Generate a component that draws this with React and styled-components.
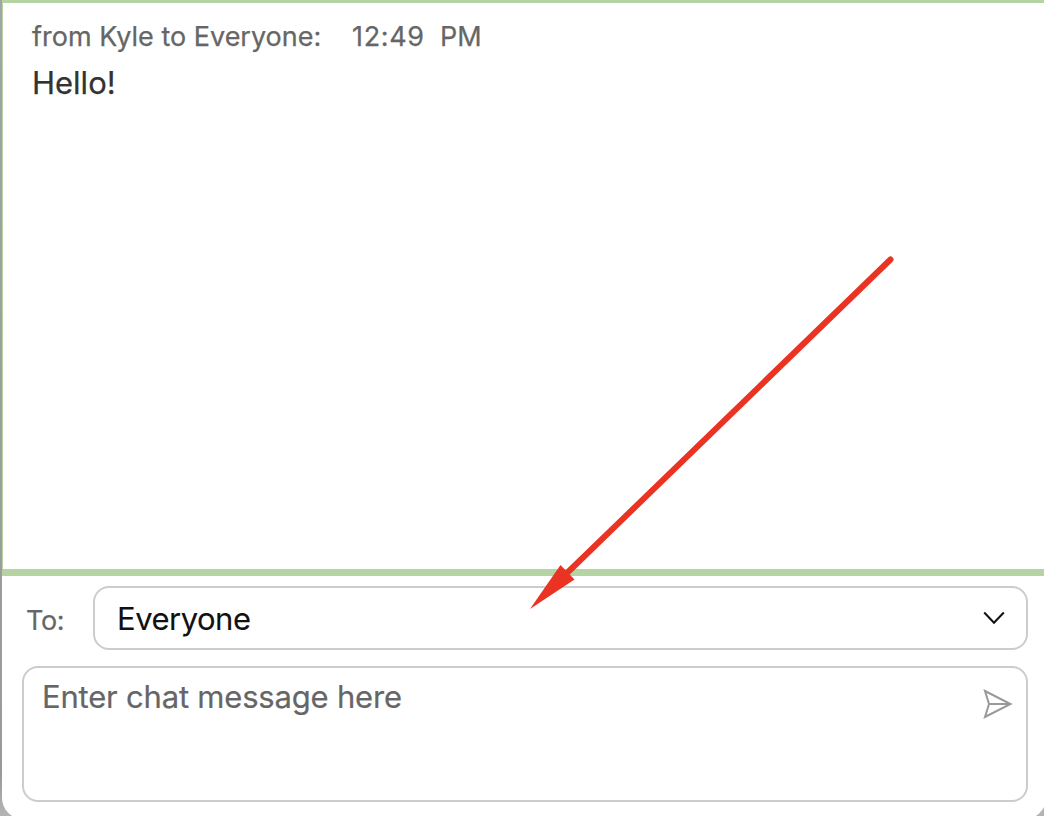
import React, { useState } from "react";
import styled, { createGlobalStyle } from "styled-components";

function App() {
  const [message, setMessage] = useState("");

  return (
    <Desktop>
      <GlobalStyle />
      <ChatWindow>
        <Messages>
          <MessageInfo>
            <Sender>from Kyle to Everyone:</Sender>
            <Time>12:49</Time>
            <Period>PM</Period>
          </MessageInfo>
          <MessageText>Hello!</MessageText>
        </Messages>
        <Recipient>
          <Label>To:</Label>
          <Select>
            <SelectValue>Everyone</SelectValue>
            <ChevronIcon viewBox="0 0 22 14">
              <path d="M1.2 1.5 L11 11.8 L20.8 1.5" />
            </ChevronIcon>
          </Select>
        </Recipient>
        <Composer>
          <Input
            placeholder="Enter chat message here"
            value={message}
            onChange={(e) => setMessage(e.target.value)}
          />
          <SendIcon viewBox="0 0 30 30">
            <path d="M2 2 L27.5 15 L2 28 L6 15 Z M6 15 H27" />
          </SendIcon>
        </Composer>
      </ChatWindow>
      <Arrow viewBox="0 0 1044 816">
        <line x1="890.5" y1="259.5" x2="566" y2="574" />
        <polygon points="530,609 560.5,565 574.5,579.5" />
      </Arrow>
    </Desktop>
  );
}

export default App;

const GlobalStyle = createGlobalStyle`
  * {
    box-sizing: border-box;
  }
  body {
    margin: 0;
    font-family: Inter, "Liberation Sans", sans-serif;
  }
`;

const Desktop = styled.div`
  position: relative;
  width: 1044px;
  height: 816px;
  padding-left: 2px;
  overflow: hidden;
  background: linear-gradient(#a3a3a8, #9a9a9a 95%, #b4b4b4);
`;

const ChatWindow = styled.div`
  display: flex;
  flex-direction: column;
  width: 1044px;
  height: 819px;
  background: #fff;
  border-radius: 0 0 21px 21px;
`;

const Messages = styled.div`
  height: 576px;
  padding: 17px 29px;
  border-top: 3px solid #b5d3a3;
  border-left: 1px solid #b5d3a3;
  border-bottom: 7px solid #b5d3a3;
`;

const MessageInfo = styled.div`
  display: flex;
  color: #666;
  font-size: 27px;
  line-height: 34px;
  -webkit-text-stroke: 0.25px #666;
`;

const Sender = styled.span`
  width: 320px;
  white-space: nowrap;
`;

const Time = styled.span`
  width: 88px;
  letter-spacing: 0.65px;
`;

const Period = styled.span``;

const MessageText = styled.div`
  margin-top: 9px;
  color: #333;
  font-size: 31px;
  line-height: 40px;
  -webkit-text-stroke: 0.25px #333;
`;

const Recipient = styled.div`
  display: flex;
  align-items: center;
  margin: 10px 18px 0 24px;
`;

const Label = styled.label`
  width: 67px;
  padding-top: 6px;
  color: #666;
  font-size: 27px;
  line-height: 34px;
  letter-spacing: -0.4px;
  -webkit-text-stroke: 0.2px #666;
`;

const Select = styled.div`
  display: flex;
  flex: 1;
  align-items: center;
  justify-content: space-between;
  height: 64px;
  padding: 0 21px 0 22px;
  border: 2px solid #ccc;
  border-radius: 16px;
`;

const SelectValue = styled.span`
  padding-top: 2px;
  color: #111;
  font-size: 31px;
  line-height: 40px;
  letter-spacing: -0.5px;
  -webkit-text-stroke: 0.1px #111;
`;

const ChevronIcon = styled.svg`
  width: 22px;
  height: 14px;
  fill: none;
  stroke: #111;
  stroke-width: 2;
`;

const Composer = styled.div`
  display: flex;
  height: 136px;
  margin: 16px 18px 0 20px;
  padding: 9px 13px 9px 18px;
  border: 2px solid #ccc;
  border-radius: 16px;
`;

const Input = styled.textarea`
  flex: 1;
  padding: 0;
  border: 0;
  outline: 0;
  resize: none;
  background: none;
  color: #111;
  font-family: inherit;
  font-size: 31px;
  line-height: 40px;
  letter-spacing: -0.2px;
  &::placeholder {
    color: #666;
    opacity: 1;
    -webkit-text-stroke: 0.2px #666;
  }
`;

const SendIcon = styled.svg`
  width: 30px;
  height: 30px;
  margin-top: 12px;
  fill: none;
  stroke: #999;
  stroke-width: 2;
`;

const Arrow = styled.svg`
  position: absolute;
  top: 0;
  left: 0;
  width: 1044px;
  height: 816px;
  pointer-events: none;
  line {
    stroke: #ea3323;
    stroke-width: 6;
    stroke-linecap: round;
  }
  polygon {
    fill: #ea3323;
  }
`;
